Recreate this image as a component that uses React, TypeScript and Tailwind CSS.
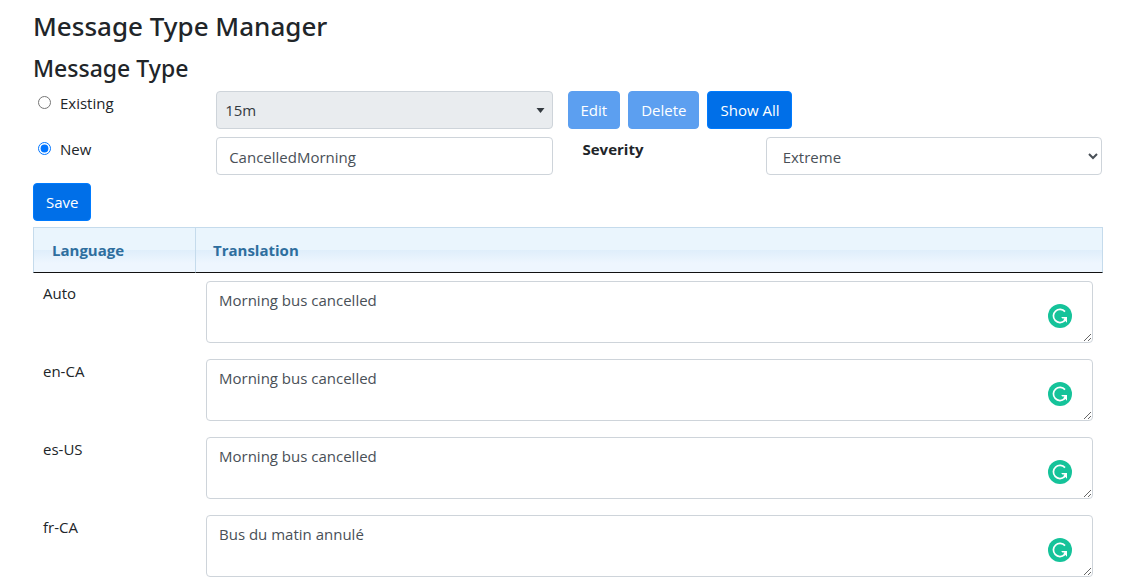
import React from 'react';

const TRANSLATIONS = [
  { language: 'Auto', text: 'Morning bus cancelled' },
  { language: 'en-CA', text: 'Morning bus cancelled' },
  { language: 'es-US', text: 'Morning bus cancelled' },
  { language: 'fr-CA', text: 'Bus du matin annulé' },
];

const Button = ({ children, disabled, onClick }: { children: React.ReactNode, disabled?: boolean, onClick?: () => void }) => (
  <button
    type="button"
    disabled={disabled}
    onClick={onClick}
    className="h-[38px] px-3 rounded border border-[#007bff] bg-[#006fe8] text-white disabled:border-[#5c9ff0] disabled:bg-[#5c9ff0]"
  >
    {children}
  </button>
);

const GrammarBadge = () => (
  <button type="button" aria-label="Check grammar" className="absolute right-[21px] bottom-[15px] w-6 h-6">
    <svg viewBox="0 0 24 24" className="w-6 h-6" fill="none">
      <circle cx="12" cy="12" r="12" fill="#15c39a" />
      <path d="M17 7.6A6.6 6.6 0 1 0 16.6 16.7" stroke="#fff" strokeWidth="1.7" />
      <path d="M13.2 12.9H19V18.7L17.4 17.1L16 17.4L15.6 15.8L16.4 14.6H14.4Z" fill="#fff" />
    </svg>
  </button>
);

const App: React.FC = () => {
  const [mode, setMode] = React.useState('new');
  const [name, setName] = React.useState('CancelledMorning');
  const isNew = mode === 'new';

  return (
    <div className="pl-[33px] pr-6 pt-2 bg-white text-[#212529] text-[15px] leading-6 font-['Open_Sans','Noto_Sans',sans-serif]">
      <h1 className="mb-[10px] text-[26px] leading-9 font-medium font-['Noto_Sans',sans-serif]">Message Type Manager</h1>
      <h2 className="mb-2 text-[23px] leading-[29px] font-medium font-['Noto_Sans',sans-serif]">Message Type</h2>

      <div className="-ml-[15px] -mr-[14px] grid grid-cols-12 mb-2">
        <div className="col-span-2 px-[15px]">
          <label className="inline-flex items-start gap-[9px] pl-[5px]">
            <input
              type="radio"
              name="mode"
              className="mt-[5px] w-[13px] h-[13px] accent-[#0075ff]"
              checked={!isNew}
              onChange={() => setMode('existing')}
            />
            Existing
          </label>
        </div>
        <div className="col-span-4 px-[15px]">
          <div className="relative">
            <select
              aria-label="Existing message type"
              disabled={isNew}
              className="w-full h-[38px] px-2 rounded border border-[#ced4da] bg-[#e9ecef] text-[#343a40] appearance-none opacity-100"
            >
              <option>15m</option>
            </select>
            <svg viewBox="0 0 9 5" className="absolute right-2 top-[17px] w-[9px] h-[5px] pointer-events-none">
              <path d="M0.5 0H8.5L4.5 5Z" fill="#343a40" />
            </svg>
          </div>
        </div>
        <div className="col-span-6 flex gap-2">
          <Button disabled={isNew}>Edit</Button>
          <Button disabled={isNew}>Delete</Button>
          <Button>Show All</Button>
        </div>
      </div>

      <div className="-ml-[15px] -mr-[14px] grid grid-cols-12 mb-2">
        <div className="col-span-2 px-[15px]">
          <label className="inline-flex items-start gap-[9px] pl-[5px]">
            <input
              type="radio"
              name="mode"
              className="mt-[5px] w-[13px] h-[13px] accent-[#0075ff]"
              checked={isNew}
              onChange={() => setMode('new')}
            />
            New
          </label>
        </div>
        <div className="col-span-4 px-[15px]">
          <input
            type="text"
            aria-label="New message type"
            className="w-full h-[38px] px-3 pt-px rounded border border-[#ced4da] text-[#495057]"
            value={name}
            onChange={(e) => setName(e.target.value)}
          />
        </div>
        <label htmlFor="severity" className="col-span-2 px-[15px] font-bold">Severity</label>
        <div className="col-span-4 px-[15px]">
          <select
            id="severity"
            className="w-full h-[38px] pl-3 pt-px rounded border border-[#ced4da] bg-white text-[#495057]"
          >
            <option>Extreme</option>
          </select>
        </div>
      </div>

      <Button>Save</Button>

      <table className="mt-[6px] w-full table-fixed border-separate border-spacing-0">
        <thead>
          <tr className="h-[46px] text-left text-[#2e6e9e]">
            <th className="w-[162px] px-[18px] border-t border-l border-t-[#c5dbec] border-l-[#c5dbec] border-b border-b-[#111] bg-[linear-gradient(#eaf5fd_50%,#dfeefb_50%,#eef6fe_80%)]">
              Language
            </th>
            <th className="px-[17px] border-t border-x border-t-[#c5dbec] border-x-[#c5dbec] border-b border-b-[#111] bg-[linear-gradient(#eaf5fd_50%,#dfeefb_50%,#eef6fe_80%)]">
              Translation
            </th>
          </tr>
        </thead>
        <tbody>
          {TRANSLATIONS.map((row) => (
            <tr key={row.language}>
              <td className="px-[10px] py-2 align-top">
                <label htmlFor={`text-${row.language}`}>{row.language}</label>
              </td>
              <td className="pl-[11px] pr-[10px] py-2">
                <div className="relative">
                  <textarea
                    id={`text-${row.language}`}
                    rows={2}
                    className="block w-full h-[62px] px-3 py-[6px] rounded border border-[#ced4da] text-[#495057]"
                    defaultValue={row.text}
                  />
                  <GrammarBadge />
                </div>
              </td>
            </tr>
          ))}
        </tbody>
      </table>
    </div>
  );
};

export default App;
